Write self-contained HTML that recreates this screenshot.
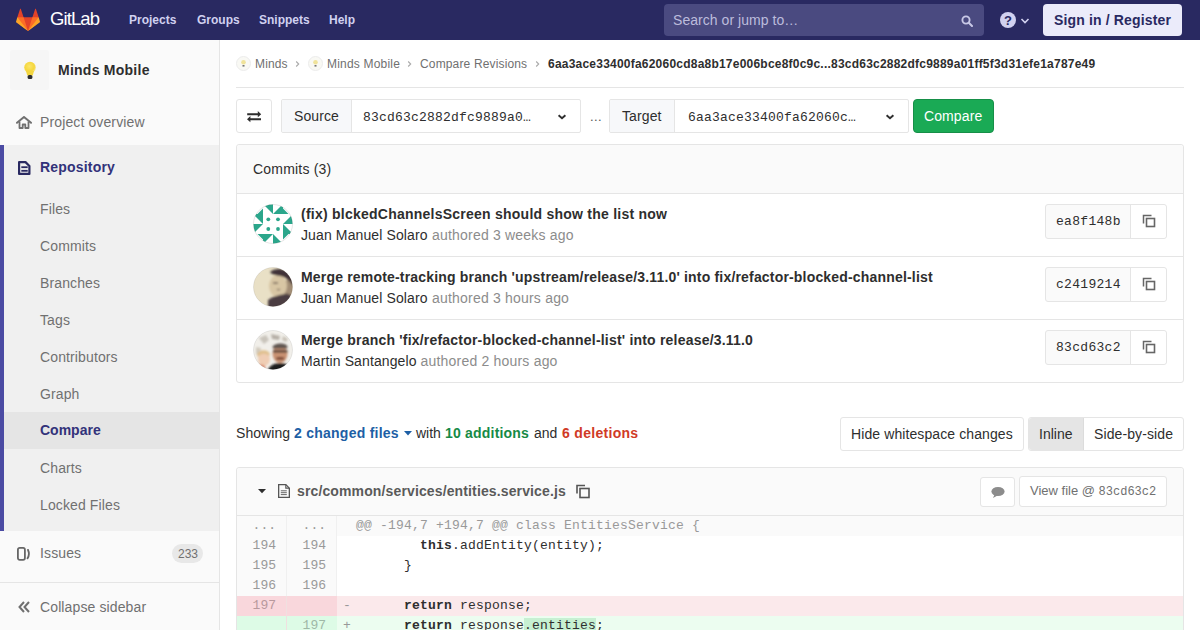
<!DOCTYPE html>
<html><head><meta charset="utf-8">
<style>
*{box-sizing:border-box;margin:0;padding:0}
html,body{width:1200px;height:630px;overflow:hidden;background:#fff;font-family:"Liberation Sans",sans-serif;font-size:14px;color:#2e2e2e}
.a{position:absolute;white-space:nowrap}
.t{position:absolute;white-space:nowrap;line-height:1}
.mono{font-family:"Liberation Mono",monospace}
.b{font-weight:bold}
#hdr{position:absolute;left:0;top:0;width:1200px;height:40px;background:#292961}
.nav{color:#d1d1f0;font-weight:bold;font-size:12px;letter-spacing:0}
#side{position:absolute;left:0;top:40px;width:220px;height:590px;background:#fafafa;border-right:1px solid #e5e5e5}
.si{color:#707070;font-size:14px;letter-spacing:0.12px}
.box{position:absolute;border:1px solid #e5e5e5;border-radius:3px;background:#fff}
.bc{font-size:12px;color:#707070}
.sep{position:absolute;width:4px;height:7px}
</style></head>
<body>
<!-- HEADER -->
<div id="hdr">
  <svg class="a" style="left:16px;top:8px" width="24" height="24" viewBox="0 0 36 36">
    <path fill="#e24329" d="M2 14l9.38 9v-9l-4-12.28c-.205-.632-1.176-.632-1.38 0z"/>
    <path fill="#e24329" d="M34 14l-9.38 9v-9l4-12.28c.205-.632 1.176-.632 1.38 0z"/>
    <path fill="#e24329" d="M18,34.38 3,14 33,14 Z"/>
    <path fill="#fc6d26" d="M18,34.38 11.38,14 2,14 6,25Z"/>
    <path fill="#fc6d26" d="M18,34.38 24.62,14 34,14 30,25Z"/>
    <path fill="#fca326" d="M2 14L.1 20.16c-.18.565 0 1.2.5 1.56l17.42 12.66z"/>
    <path fill="#fca326" d="M34 14l1.9 6.16c.18.565 0 1.2-.5 1.56L18 34.38z"/>
  </svg>
  <div class="t" style="left:50px;top:10px;color:#fff;font-size:18.5px;letter-spacing:-0.9px">GitLab</div>
  <div class="t nav" style="left:129px;top:14px">Projects</div>
  <div class="t nav" style="left:197px;top:14px">Groups</div>
  <div class="t nav" style="left:259px;top:14px">Snippets</div>
  <div class="t nav" style="left:329px;top:14px">Help</div>
  <div class="a" style="left:664px;top:4px;width:320px;height:32px;border-radius:4px;background:#4a4a80"></div>
  <div class="t" style="left:673px;top:13px;color:#bcbcdc;font-size:14px;letter-spacing:0.05px">Search or jump to…</div>
  <svg class="a" style="left:961px;top:15px" width="13" height="12" viewBox="0 0 13 12"><circle cx="5" cy="5" r="3.6" fill="none" stroke="#c8c8e6" stroke-width="1.9"/><path d="M7.8 7.8l3.2 3.2" stroke="#c8c8e6" stroke-width="2" stroke-linecap="round"/></svg>
  <svg class="a" style="left:1000px;top:12px" width="16" height="16" viewBox="0 0 16 16"><circle cx="8" cy="8" r="8" fill="#d1d1f0"/><text x="8" y="12.8" text-anchor="middle" font-family="Liberation Sans" font-weight="bold" font-size="13" fill="#292961">?</text></svg>
  <svg class="a" style="left:1020px;top:17px" width="10" height="8" viewBox="0 0 10 8"><path d="M1.5 2l3.5 3.5L8.5 2" fill="none" stroke="#d1d1f0" stroke-width="1.6"/></svg>
  <div class="a" style="left:1043px;top:4px;width:139px;height:32px;border-radius:4px;background:#ebebfa"></div>
  <div class="t b" style="left:1054px;top:13px;color:#292961;font-size:14px;letter-spacing:0.15px">Sign in / Register</div>
</div>

<!-- SIDEBAR -->
<div id="side">
  <div class="a" style="left:10px;top:10px;width:39px;height:40px;border-radius:2px;background:#f6f6f6"></div>
  <svg class="a" style="left:23px;top:21px" width="14" height="19" viewBox="0 0 14 19"><defs><radialGradient id="bulb" cx="0.45" cy="0.4" r="0.6"><stop offset="0" stop-color="#fbe66a"/><stop offset="0.7" stop-color="#f5d63c"/><stop offset="1" stop-color="#f7e58a"/></radialGradient></defs><circle cx="7" cy="6.5" r="5.8" fill="url(#bulb)"/><path d="M3 10h8l-1.2 4.5H4.2z" fill="#f3d640"/><rect x="4.6" y="14" width="4.8" height="4" rx="1.5" fill="#2e2e2e"/></svg>
  <div class="t b" style="left:58px;top:23px;font-size:14px;color:#2e2e2e;letter-spacing:0.25px">Minds Mobile</div>

  <svg class="a" style="left:16px;top:76px" width="16" height="13" viewBox="0 0 16 13"><path d="M1 6.8L8 1l7 5.8" fill="none" stroke="#707070" stroke-width="2" stroke-linejoin="round" stroke-linecap="round"/><path d="M3.5 5.5V12h3.2V8.5h2.6V12h3.2V5.5" fill="none" stroke="#707070" stroke-width="1.8" stroke-linejoin="round"/></svg>
  <div class="t si" style="left:40px;top:75px">Project overview</div>

  <div class="a" style="left:0;top:105px;width:219px;height:386px;background:#f0f0f0"></div>
  <div class="a" style="left:0;top:105px;width:4px;height:386px;background:#4b4ba3"></div>
  <svg class="a" style="left:18px;top:121px" width="13" height="14" viewBox="0 0 13 14"><path d="M1.1 1.1h6.4l3.9 3.9v7.9H1.1z" fill="none" stroke="#292961" stroke-width="2.2" stroke-linejoin="round"/><rect x="3.3" y="5.3" width="6.4" height="1.8" fill="#292961"/><rect x="3.3" y="8.9" width="6.4" height="1.8" fill="#292961"/></svg>
  <div class="t b" style="left:40px;top:120px;font-size:14px;color:#32327a;letter-spacing:0.19px">Repository</div>
  <div class="t si" style="left:40px;top:161.5px">Files</div>
  <div class="t si" style="left:40px;top:198.5px">Commits</div>
  <div class="t si" style="left:40px;top:235.5px">Branches</div>
  <div class="t si" style="left:40px;top:272.5px">Tags</div>
  <div class="t si" style="left:40px;top:309.5px">Contributors</div>
  <div class="t si" style="left:40px;top:346.5px">Graph</div>
  <div class="a" style="left:4px;top:372px;width:215px;height:37px;background:#e5e5e5"></div>
  <div class="t b" style="left:40px;top:383px;font-size:14px;color:#32327a">Compare</div>
  <div class="t si" style="left:40px;top:420.5px">Charts</div>
  <div class="t si" style="left:40px;top:457.5px">Locked Files</div>

  <svg class="a" style="left:17px;top:507px" width="14" height="14" viewBox="0 0 14 14"><rect x="0.9" y="0.9" width="7" height="12" rx="1.8" fill="none" stroke="#666" stroke-width="1.8"/><path d="M10.2 3h0.8c1.3 2.8 1.1 6.2-0.8 9" fill="none" stroke="#666" stroke-width="1.8"/></svg>
  <div class="t si" style="left:40px;top:506px">Issues</div>
  <div class="a" style="left:172px;top:504px;width:31px;height:19px;border-radius:10px;background:#e8e8e8"></div>
  <div class="t" style="left:178px;top:508px;font-size:12px;color:#707070">233</div>

  <div class="a" style="left:0;top:542px;width:219px;height:1px;background:#e5e5e5"></div>
  <svg class="a" style="left:17px;top:560px" width="14" height="14" viewBox="0 0 14 14"><path d="M7 2L2.5 7 7 12M12 2L7.5 7 12 12" fill="none" stroke="#707070" stroke-width="2"/></svg>
  <div class="t si" style="left:40px;top:560px">Collapse sidebar</div>
</div>

<!-- MAIN -->
<div id="main">
  <!-- breadcrumb -->
  <div class="a" style="left:236px;top:56px;width:15px;height:15px;border-radius:50%;background:#f9f9f4;border:1px solid #ececec"></div>
  <svg class="a" style="left:240px;top:59px" width="7" height="9" viewBox="0 0 7 9"><circle cx="3.5" cy="3.2" r="2.3" fill="#f0e39a"/><rect x="2.5" y="6" width="2" height="1.6" fill="#777"/></svg>
  <div class="t bc" style="left:255px;top:58px;letter-spacing:0.15px">Minds</div>
  <svg class="a" style="left:295px;top:60px" width="5" height="8" viewBox="0 0 5 8"><path d="M1.2 1.5l2.5 2.5-2.5 2.5" fill="none" stroke="#aaa" stroke-width="1.1"/></svg>
  <div class="a" style="left:308px;top:56px;width:15px;height:15px;border-radius:50%;background:#f9f9f4;border:1px solid #ececec"></div>
  <svg class="a" style="left:312px;top:59px" width="7" height="9" viewBox="0 0 7 9"><circle cx="3.5" cy="3.2" r="2.3" fill="#f0e39a"/><rect x="2.5" y="6" width="2" height="1.6" fill="#777"/></svg>
  <div class="t bc" style="left:327px;top:58px;letter-spacing:0.2px">Minds Mobile</div>
  <svg class="a" style="left:407px;top:60px" width="5" height="8" viewBox="0 0 5 8"><path d="M1.2 1.5l2.5 2.5-2.5 2.5" fill="none" stroke="#aaa" stroke-width="1.1"/></svg>
  <div class="t bc" style="left:420px;top:58px;letter-spacing:0.15px">Compare Revisions</div>
  <svg class="a" style="left:535px;top:60px" width="5" height="8" viewBox="0 0 5 8"><path d="M1.2 1.5l2.5 2.5-2.5 2.5" fill="none" stroke="#aaa" stroke-width="1.1"/></svg>
  <div class="t b" style="left:548px;top:58px;font-size:12px;color:#2e2e2e;letter-spacing:0.22px">6aa3ace33400fa62060cd8a8b17e006bce8f0c9c...83cd63c2882dfc9889a01ff5f3d31efe1a787e49</div>
  <div class="a" style="left:236px;top:87px;width:948px;height:1px;background:#e5e5e5"></div>

  <!-- compare form -->
  <div class="box" style="left:236px;top:99px;width:36px;height:34px"></div>
  <svg class="a" style="left:246px;top:109px" width="16" height="14" viewBox="0 0 16 14"><path d="M1.2 5.2h11.5M3.5 10.2H15" stroke="#2e2e2e" stroke-width="1.9"/><path d="M15.2 5.2L11.8 2.1V8.3z M1 10.2l3.4-3.1v6.2z" fill="#2e2e2e"/></svg>

  <div class="box" style="left:281px;top:99px;width:300px;height:34px;border-radius:2px"></div>
  <div class="a" style="left:282px;top:100px;width:70px;height:32px;background:#f7f8fa;border-right:1px solid #e5e5e5;border-radius:2px 0 0 2px"></div>
  <div class="t" style="left:294px;top:109px;font-size:14px;color:#2e2e2e;letter-spacing:0.1px">Source</div>
  <div class="t mono" style="left:363px;top:110.5px;font-size:13px;letter-spacing:0.2px;color:#2e2e2e">83cd63c2882dfc9889a0…</div>
  <svg class="a" style="left:557px;top:113px" width="10" height="8" viewBox="0 0 10 8"><path d="M1.6 2.2l3.4 3.1 3.4-3.1" fill="none" stroke="#2e2e2e" stroke-width="1.9"/></svg>
  <div class="t" style="left:590px;top:110px;font-size:13px;color:#555;letter-spacing:0.4px">...</div>

  <div class="box" style="left:609px;top:99px;width:300px;height:34px;border-radius:2px"></div>
  <div class="a" style="left:610px;top:100px;width:65px;height:32px;background:#f7f8fa;border-right:1px solid #e5e5e5;border-radius:2px 0 0 2px"></div>
  <div class="t" style="left:622px;top:109px;font-size:14px;color:#2e2e2e;letter-spacing:0.1px">Target</div>
  <div class="t mono" style="left:688px;top:110.5px;font-size:13px;letter-spacing:0.2px;color:#2e2e2e">6aa3ace33400fa62060c…</div>
  <svg class="a" style="left:885px;top:113px" width="10" height="8" viewBox="0 0 10 8"><path d="M1.6 2.2l3.4 3.1 3.4-3.1" fill="none" stroke="#2e2e2e" stroke-width="1.9"/></svg>

  <div class="a" style="left:913px;top:99px;width:81px;height:34px;background:#1aaa55;border:1px solid #168f48;border-radius:4px"></div>
  <div class="t" style="left:924px;top:109px;font-size:14px;color:#fff;letter-spacing:0.1px">Compare</div>

  <!-- commits card -->
  <div class="box" style="left:236px;top:144px;width:948px;height:239px;background:#fff"></div>
  <div class="a" style="left:237px;top:145px;width:946px;height:49px;background:#fafafa;border-bottom:1px solid #e5e5e5;border-radius:3px 3px 0 0"></div>
  <div class="t" style="left:253px;top:162px;font-size:14px;color:#2e2e2e;letter-spacing:0.2px">Commits (3)</div>

  <div class="a" style="left:237px;top:256px;width:946px;height:1px;background:#e5e5e5"></div>
  <div class="a" style="left:237px;top:319px;width:946px;height:1px;background:#e5e5e5"></div>

  <!-- row1 -->
  <svg class="a" style="left:253px;top:204px" width="40" height="40" viewBox="0 0 40 40">
    <defs><clipPath id="c1"><circle cx="20" cy="20" r="19.5"/></clipPath></defs>
    <g clip-path="url(#c1)"><rect width="40" height="40" fill="#fff"/>
    <g fill="#2ba68b"><polygon points="10,4.5 10,10 4.5,10"/><polygon points="10,0 20,0 20,10"/><polygon points="30,0 30,10 20,10"/><polygon points="35.5,10 30,10 30,4.5"/><polygon points="0,10 10,10 10,20"/><polygon points="40,10 40,20 30,20"/><polygon points="0,20 10,20 0,30"/><polygon points="30,20 30,30 40,30"/><polygon points="4.5,30 10,30 10,35.5"/><polygon points="10,30 20,30 10,40"/><polygon points="20,30 20,40 30,40"/><polygon points="30,35.5 30,30 35.5,30"/>
      <circle cx="15.3" cy="15.3" r="1.9"/><circle cx="25" cy="15.3" r="1.9"/><circle cx="15.3" cy="25" r="1.9"/><circle cx="25" cy="25" r="1.9"/>
    </g></g>
    <circle cx="20" cy="20" r="19.5" fill="none" stroke="rgba(0,0,0,0.1)"/>
  </svg>
  <div class="t b" style="left:301px;top:207px;font-size:14px;color:#2e2e2e;letter-spacing:0.24px">(fix) blckedChannelsScreen should show the list now</div>
  <div class="t" style="left:301px;top:228px;font-size:14px;color:#2e2e2e;letter-spacing:0.12px">Juan Manuel Solaro</div><div class="t" style="left:432px;top:228px;font-size:14px;color:#8c8c8c;letter-spacing:0.2px">authored 3 weeks ago</div>

  <!-- row2 -->
  <svg class="a" style="left:253px;top:267px" width="40" height="40" viewBox="0 0 40 40">
    <defs><clipPath id="c2"><circle cx="20" cy="20" r="19.5"/></clipPath><filter id="bl2" x="-20%" y="-20%" width="140%" height="140%"><feGaussianBlur stdDeviation="1.2"/></filter></defs>
    <g clip-path="url(#c2)"><rect width="40" height="40" fill="#e9e0c6"/>
    <g filter="url(#bl2)">
    <ellipse cx="36" cy="22" rx="6" ry="10" fill="#a38e76"/>
    <ellipse cx="25" cy="19" rx="9" ry="11" fill="#d8c6a4"/>
    <path d="M17 5C22 0 34 1 39 8 41 12 41 16 40 19 37 14 33 10 27 9 23 8 19 8 17 5z" fill="#3f3337"/>
    <path d="M20 16h5" stroke="#6a5a50" stroke-width="1.4"/>
    <path d="M24 22c1 1 2 1 3 0" stroke="#8a7664" stroke-width="1.4" fill="none"/>
    <path d="M15 33C20 29 27 28 31 27 35 26 38 28 41 31V42H15z" fill="#4b3c43"/>
    </g></g>
    <circle cx="20" cy="20" r="19.5" fill="none" stroke="rgba(0,0,0,0.08)"/>
  </svg>
  <div class="t b" style="left:301px;top:270px;font-size:14px;color:#2e2e2e;letter-spacing:0.18px">Merge remote-tracking branch 'upstream/release/3.11.0' into fix/refactor-blocked-channel-list</div>
  <div class="t" style="left:301px;top:291px;font-size:14px;color:#2e2e2e;letter-spacing:0.12px">Juan Manuel Solaro</div><div class="t" style="left:432px;top:291px;font-size:14px;color:#8c8c8c;letter-spacing:0.2px">authored 3 hours ago</div>

  <!-- row3 -->
  <svg class="a" style="left:253px;top:330px" width="40" height="40" viewBox="0 0 40 40">
    <defs><clipPath id="c3"><circle cx="20" cy="20" r="19.5"/></clipPath><filter id="bl3" x="-20%" y="-20%" width="140%" height="140%"><feGaussianBlur stdDeviation="0.8"/></filter></defs>
    <g clip-path="url(#c3)"><rect width="40" height="40" fill="#f1efea"/>
    <g filter="url(#bl3)">
    <path d="M6 8l7-3 3 5-5 4z" fill="#c9c4bb"/>
    <path d="M18 4l9 2-1 4-7-1z" fill="#b5afa6"/>
    <path d="M3 17l5 1-1 7-4-1z" fill="#d2cbbe"/>
    <path d="M30 6l5 3-2 3-4-2z" fill="#c7c1b6"/>
    <ellipse cx="11" cy="29" rx="6" ry="7" fill="#efcdb4"/>
    <path d="M4 25c1-5 10-7 13-1l-1 2c-3-3-8-3-11 1z" fill="#e0c08e"/>
    <ellipse cx="27" cy="24" rx="7.5" ry="9" fill="#c99272"/>
    <path d="M19.5 17c1-4 14-5 15 0l-.5 1.5H20z" fill="#5e5450"/>
    <path d="M20 20.5h14.5v1.8H20z" fill="#1f1f1f"/>
    <path d="M23 28c2.5-1.2 6-1.2 8.5 0l-.8 1.6h-7z" fill="#6a3526"/>
    <path d="M14 42c1.5-6 7-9 13-9s11 3 13 9z" fill="#1f1d1d"/>
    <path d="M3 36c2-2 6-2 9 0l1 6H1z" fill="#d9866a"/>
    </g></g>
    <circle cx="20" cy="20" r="19.5" fill="none" stroke="rgba(0,0,0,0.08)"/>
  </svg>
  <div class="t b" style="left:301px;top:333px;font-size:14px;color:#2e2e2e;letter-spacing:0.2px">Merge branch 'fix/refactor-blocked-channel-list' into release/3.11.0</div>
  <div class="t" style="left:301px;top:354px;font-size:14px;color:#2e2e2e;letter-spacing:0.12px">Martin Santangelo</div><div class="t" style="left:420.5px;top:354px;font-size:14px;color:#8c8c8c;letter-spacing:0.2px">authored 2 hours ago</div>

  <!-- sha buttons -->
  <div class="box" style="left:1045px;top:204px;width:122px;height:35px;background:#fafafa"></div>
  <div class="a" style="left:1130px;top:205px;width:36px;height:33px;background:#fff;border-left:1px solid #e5e5e5;border-radius:0 3px 3px 0"></div>
  <div class="t mono" style="left:1056px;top:215px;font-size:13px;color:#2e2e2e;letter-spacing:0.3px">ea8f148b</div>
  <div class="box" style="left:1045px;top:267px;width:122px;height:35px;background:#fafafa"></div>
  <div class="a" style="left:1130px;top:268px;width:36px;height:33px;background:#fff;border-left:1px solid #e5e5e5;border-radius:0 3px 3px 0"></div>
  <div class="t mono" style="left:1056px;top:278px;font-size:13px;color:#2e2e2e;letter-spacing:0.3px">c2419214</div>
  <div class="box" style="left:1045px;top:330px;width:122px;height:35px;background:#fafafa"></div>
  <div class="a" style="left:1130px;top:331px;width:36px;height:33px;background:#fff;border-left:1px solid #e5e5e5;border-radius:0 3px 3px 0"></div>
  <div class="t mono" style="left:1056px;top:341px;font-size:13px;color:#2e2e2e;letter-spacing:0.3px">83cd63c2</div>
  <svg class="a" style="left:1142px;top:214px" width="14" height="14" viewBox="0 0 14 14"><path d="M1.5 9.5V1.5h8" fill="none" stroke="#666" stroke-width="1.5"/><rect x="4.5" y="4.5" width="8" height="8" fill="none" stroke="#666" stroke-width="1.6"/></svg>
  <svg class="a" style="left:1142px;top:277px" width="14" height="14" viewBox="0 0 14 14"><path d="M1.5 9.5V1.5h8" fill="none" stroke="#666" stroke-width="1.5"/><rect x="4.5" y="4.5" width="8" height="8" fill="none" stroke="#666" stroke-width="1.6"/></svg>
  <svg class="a" style="left:1142px;top:340px" width="14" height="14" viewBox="0 0 14 14"><path d="M1.5 9.5V1.5h8" fill="none" stroke="#666" stroke-width="1.5"/><rect x="4.5" y="4.5" width="8" height="8" fill="none" stroke="#666" stroke-width="1.6"/></svg>
  

  <!-- showing -->
  <div class="t" style="left:236px;top:426px;font-size:14px;color:#2e2e2e;letter-spacing:0.05px">Showing</div>
  <div class="t b" style="left:294px;top:426px;font-size:14px;color:#1d5fa5;letter-spacing:0.25px">2 changed files</div>
  <svg class="a" style="left:404px;top:431px" width="8" height="5" viewBox="0 0 8 5"><path d="M0 0h8L4 4.5z" fill="#1d5fa5"/></svg>
  <div class="t" style="left:416px;top:426px;font-size:14px;color:#2e2e2e">with</div>
  <div class="t b" style="left:445px;top:426px;font-size:14px;color:#168a46;letter-spacing:0.2px">10 additions</div>
  <div class="t" style="left:534px;top:426px;font-size:14px;color:#2e2e2e">and</div>
  <div class="t b" style="left:562px;top:426px;font-size:14px;color:#d03a26;letter-spacing:0.3px">6 deletions</div>

  <div class="box" style="left:840px;top:417px;width:184px;height:34px"></div>
  <div class="t" style="left:851px;top:427px;font-size:14px;color:#2e2e2e;letter-spacing:0.1px">Hide whitespace changes</div>
  <div class="box" style="left:1028px;top:417px;width:156px;height:34px"></div>
  <div class="a" style="left:1029px;top:418px;width:55px;height:32px;background:#e5e5e5;border-right:1px solid #dcdcdc;border-radius:3px 0 0 3px"></div>
  <div class="t" style="left:1039px;top:427px;font-size:14px;color:#2e2e2e">Inline</div>
  <div class="t" style="left:1094px;top:427px;font-size:14px;color:#2e2e2e;letter-spacing:0.1px">Side-by-side</div>

  <!-- file card -->
  <div class="box" style="left:236px;top:467px;width:948px;height:200px"></div>
  <div class="a" style="left:237px;top:468px;width:946px;height:48px;background:#fafafa;border-bottom:1px solid #e5e5e5;border-radius:3px 3px 0 0"></div>
  <svg class="a" style="left:258px;top:489px" width="8" height="5" viewBox="0 0 8 5"><path d="M0 0h8L4 4.2z" fill="#2e2e2e"/></svg>
  <svg class="a" style="left:278px;top:484px" width="12" height="14" viewBox="0 0 12 14"><path d="M0.65 0.65h7.2l3.5 3.5v9.2H0.65z" fill="none" stroke="#555" stroke-width="1.3"/><path d="M7.8 0.65v3.5h3.5" fill="none" stroke="#555" stroke-width="1.1"/><path d="M2.8 6.8h6M2.8 8.7h6M2.8 10.6h6" stroke="#555" stroke-width="0.9"/></svg>
  <div class="t b" style="left:297px;top:484px;font-size:14px;color:#5a5a5a;letter-spacing:0.13px">src/common/services/entities.service.js</div>
  <svg class="a" style="left:575px;top:483px" width="16" height="16" viewBox="0 0 16 16"><path d="M2 10.5V2.5h8" fill="none" stroke="#555" stroke-width="1.6"/><rect x="5" y="5.5" width="9" height="9" fill="none" stroke="#555" stroke-width="1.6"/></svg>

  <div class="box" style="left:980px;top:477px;width:35px;height:30px"></div>
  <svg class="a" style="left:990px;top:486px" width="16" height="13" viewBox="0 0 16 13"><ellipse cx="8" cy="5.5" rx="6.6" ry="4.6" fill="#8c8c8c"/><path d="M4.5 8.5l-1.5 3.5 5-2.8z" fill="#8c8c8c"/></svg>
  <div class="box" style="left:1019px;top:476px;width:148px;height:31px"></div>
  <div class="t" style="left:1030px;top:484px;font-size:13px;color:#707070">View file @ <span class="mono" style="font-size:12px">83cd63c2</span></div>

  <!-- diff table -->
  <div class="a" style="left:237px;top:516px;width:946px;height:114px;background:#fff"></div>
  <div class="a" style="left:237px;top:516px;width:946px;height:20px;background:#fafafa"></div>
  <div class="a" style="left:237px;top:516px;width:50px;height:114px;background:#fafafa;border-right:1px solid #f0f0f0"></div>
  <div class="a" style="left:287px;top:516px;width:50px;height:114px;background:#fafafa;border-right:1px solid #f0f0f0"></div>
  <div class="a" style="left:237px;top:596px;width:946px;height:20px;background:#fbe9eb"></div>
  <div class="a" style="left:237px;top:596px;width:100px;height:20px;background:#f9d7dc"></div>
  <div class="a" style="left:237px;top:616px;width:946px;height:20px;background:#ecfdf0"></div>
  <div class="a" style="left:237px;top:616px;width:100px;height:20px;background:#ddfbe6"></div>
  <div class="a" style="left:286px;top:596px;width:1px;height:40px;background:#f0e0e0"></div>
  <div class="t mono" style="left:237px;top:519px;width:39px;text-align:right;font-size:13px;color:#999">...</div><div class="t mono" style="left:286px;top:519px;width:40px;text-align:right;font-size:13px;color:#999">...</div><div class="t mono" style="left:356px;top:519px;font-size:13px;color:#999;white-space:pre;letter-spacing:0.2px">@@ -194,7 +194,7 @@ class EntitiesService {</div>
  <div class="t mono" style="left:237px;top:539px;width:39px;text-align:right;font-size:13px;color:#999">194</div><div class="t mono" style="left:286px;top:539px;width:40px;text-align:right;font-size:13px;color:#999">194</div><div class="t mono" style="left:356px;top:539px;font-size:13px;color:#2e2e2e;white-space:pre;letter-spacing:0.2px">        <b>this</b>.addEntity(entity);</div>
  <div class="t mono" style="left:237px;top:559px;width:39px;text-align:right;font-size:13px;color:#999">195</div><div class="t mono" style="left:286px;top:559px;width:40px;text-align:right;font-size:13px;color:#999">195</div><div class="t mono" style="left:356px;top:559px;font-size:13px;color:#2e2e2e;white-space:pre;letter-spacing:0.2px">      }</div>
  <div class="t mono" style="left:237px;top:579px;width:39px;text-align:right;font-size:13px;color:#999">196</div><div class="t mono" style="left:286px;top:579px;width:40px;text-align:right;font-size:13px;color:#999">196</div><div class="t mono" style="left:356px;top:579px;font-size:13px;color:#2e2e2e;white-space:pre;letter-spacing:0.2px"></div>
  <div class="t mono" style="left:237px;top:599px;width:39px;text-align:right;font-size:13px;color:#b8999d">197</div><div class="t mono" style="left:286px;top:599px;width:40px;text-align:right;font-size:13px;color:#b8999d"></div><div class="t mono" style="left:356px;top:599px;font-size:13px;color:#2e2e2e;white-space:pre;letter-spacing:0.2px">      <b>return</b> response;</div><div class="t mono" style="left:343px;top:599px;font-size:13px;color:#999">-</div>
  <div class="t mono" style="left:237px;top:619px;width:39px;text-align:right;font-size:13px;color:#9fb8a6"></div><div class="t mono" style="left:286px;top:619px;width:40px;text-align:right;font-size:13px;color:#9fb8a6">197</div><div class="t mono" style="left:356px;top:619px;font-size:13px;color:#2e2e2e;white-space:pre;letter-spacing:0.2px">      <b>return</b> response<span style="background:#c7f0d2">.entities</span>;</div><div class="t mono" style="left:343px;top:619px;font-size:13px;color:#999">+</div>
  
</div>
</body></html>
